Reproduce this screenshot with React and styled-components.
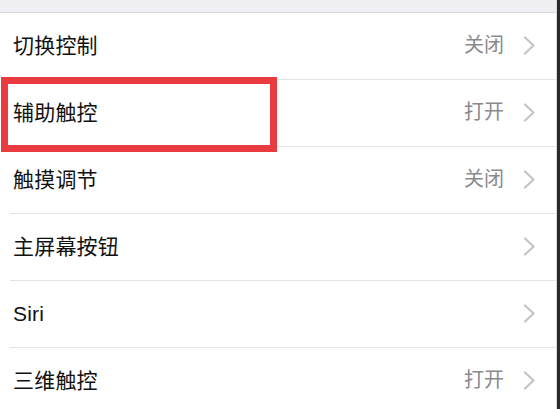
import React from 'react';
import styled, { createGlobalStyle } from 'styled-components';

const GlobalStyle = createGlobalStyle`
  html, body {
    margin: 0;
    padding: 0;
    background: #ffffff;
  }
  body {
    font-family: "Liberation Sans", "Noto Sans CJK SC", sans-serif;
  }
`;

const items = [
  { label: '切换控制', value: '关闭' },
  { label: '辅助触控', value: '打开', highlight: true },
  { label: '触摸调节', value: '关闭' },
  { label: '主屏幕按钮', value: '' },
  { label: 'Siri', value: '' },
  { label: '三维触控', value: '打开' },
];

const Chevron = () => (
  <svg width="13" height="19" viewBox="0 0 13 19" fill="none">
    <path d="M2 1.5 L10.5 9.5 L2 17.5" stroke="#c4c4c8" strokeWidth="2.2" strokeLinecap="round" strokeLinejoin="round" />
  </svg>
);

const App = () => {
  return (
    <>
      <GlobalStyle />
      <Screen>
        <Main>
          <TopBar />
          <List>
            {items.map((item) => (
              <Row key={item.label}>
                <Label>{item.label}</Label>
                <Accessory>
                  {item.value && <Value>{item.value}</Value>}
                  <Chevron />
                </Accessory>
                {item.highlight && <Highlight />}
              </Row>
            ))}
          </List>
        </Main>
        <Edge />
      </Screen>
    </>
  );
};

export default App;

const Screen = styled.div`
  width: 560px;
  height: 409px;
  display: flex;
  overflow: hidden;
  background: #ffffff;
`;

const Main = styled.div`
  flex: 1;
  display: flex;
  flex-direction: column;
`;

const TopBar = styled.div`
  height: 12px;
  flex-shrink: 0;
  background: #efeff4;
  border-bottom: 1px solid #d9d9dd;
`;

const List = styled.div`
  display: flex;
  flex-direction: column;
`;

const Row = styled.div`
  position: relative;
  height: 66px;
  flex-shrink: 0;
  margin-left: 10px;
  padding-left: 3px;
  padding-right: 20px;
  display: flex;
  align-items: center;
  justify-content: space-between;
  border-bottom: 1px solid #e3e3e6;
`;

const Label = styled.span`
  font-size: 21px;
  line-height: 1;
  color: #111111;
  letter-spacing: 0.2px;
  margin-top: -2px;
`;

const Accessory = styled.div`
  display: flex;
  align-items: center;
  gap: 19px;
  margin-top: -2px;
`;

const Value = styled.span`
  font-size: 20px;
  line-height: 1;
  color: #8a8a8e;
`;

const Highlight = styled.div`
  position: absolute;
  left: -9px;
  top: -3px;
  width: 276px;
  height: 75px;
  box-sizing: border-box;
  border: 7px solid #ea3b40;
  pointer-events: none;
`;

const Edge = styled.div`
  width: 3px;
  flex-shrink: 0;
  background: #2a2a2a;
  border-left: 1px solid #dcdcdc;
`;
